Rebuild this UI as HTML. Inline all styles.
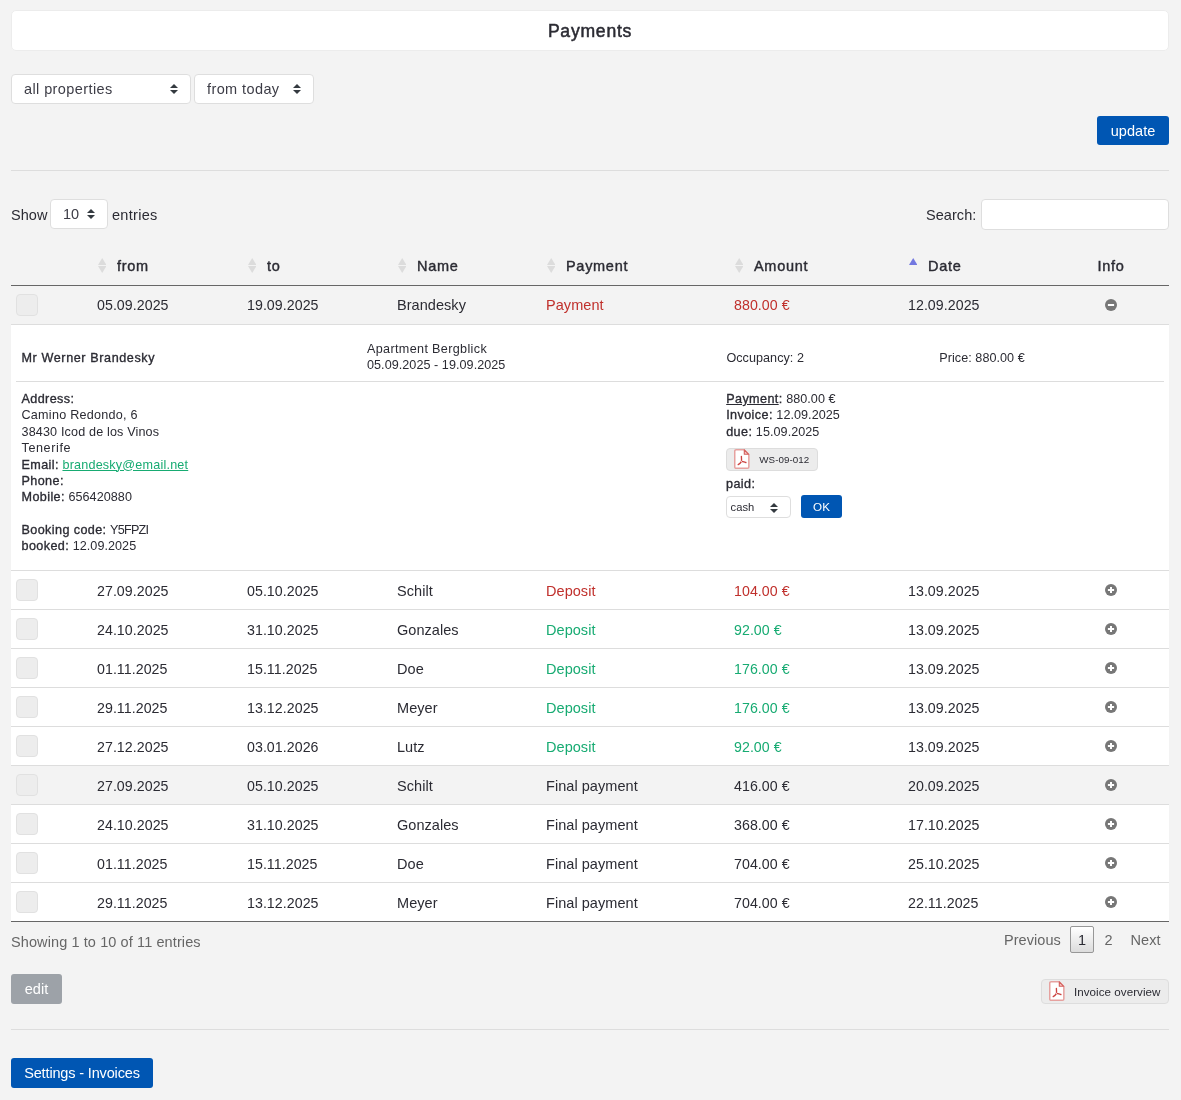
<!DOCTYPE html>
<html lang="en">
<head>
<meta charset="utf-8">
<title>Payments</title>
<style>
:root{
  --ff:"Liberation Sans", sans-serif;
  --fs:14.5px; --fs13:12.6px; --fsn:14.2px; --fs11:11.6px; --fs10:9.8px; --fs18:17.6px;
  --ls:.05px;
}
*{box-sizing:border-box;}
html,body{margin:0;padding:0;}
body{
  width:1181px;height:1100px;overflow:hidden;position:relative;will-change:transform;
  background:#f3f3f3;color:#2b2b33;
  font-family:var(--ff);font-size:var(--fs);letter-spacing:var(--ls);line-height:21px;
}
.abs{position:absolute;white-space:nowrap;}
b,.sb{font-weight:normal;-webkit-text-stroke:.33px currentColor;letter-spacing:.4px;}
#title{left:11px;top:10px;width:1158px;height:41px;background:#fff;border:1px solid #ececec;border-radius:5px;
  text-align:center;font-weight:normal;-webkit-text-stroke:.5px currentColor;letter-spacing:.75px;font-size:var(--fs18);line-height:40.600px;color:#2b2b33;}
.csel{background:#fff;border:1px solid #dedede;border-radius:4px;height:30px;line-height:28px;
  padding-left:12px;color:#3c3c46;}
.sarw{position:absolute;right:12px;top:9px;width:8px;height:10px;}
.btn{border-radius:3px;color:#fff;text-align:center;}
.btn-blue{background:#0056b3;}
.btn-grey{background:#9da2a8;}
.hr{left:11px;width:1158px;height:1px;background:#dddddd;}
.inp{background:#fff;border:1px solid #dedede;border-radius:4px;}
#tbl{left:11px;top:246px;width:1158px;border-collapse:collapse;table-layout:fixed;white-space:nowrap;}
#tbl th,#tbl td{padding:0;text-align:left;vertical-align:middle;font-weight:normal;}
#tbl thead th{height:39px;font-weight:normal;-webkit-text-stroke:.4px currentColor;letter-spacing:.7px;border-bottom:1px solid #666;position:relative;color:#2b2b33;padding-left:20px;padding-top:2px;}
#tbl thead th.c{padding-left:0;}
#tbl tbody tr.r{background:#fff;}
#tbl tbody tr.r td{border-bottom:1px solid #ddd;height:39px;padding-top:2px;}
#tbl td.n{font-size:var(--fsn);}
#tbl tbody tr.r2 td{padding-top:4px;}
#tbl tr.r2 .cb{top:-2px;}
#tbl tr.r2 .ic{top:-2px;}
#tbl tbody tr.g{background:transparent;}
#tbl tbody tr.last td{border-bottom:1px solid #666;}
#tbl .c{text-align:center;}
.cb{position:relative;top:-1px;display:block;width:22px;height:22px;margin-left:5px;background:#ededed;border:1px solid #e1e1e1;border-radius:4px;}
.red{color:#c0302c;}
.grn{color:#17ab72;}
.ic{display:inline-block;vertical-align:middle;width:12px;height:12px;position:relative;top:-1px;}
.so{position:absolute;left:0.600px;top:12px;width:8.4px;height:15px;}
#det{background:#fff;}
#det td{border-bottom:1px solid #ddd;height:246px;}
#dw{position:relative;height:245px;font-size:var(--fs13);line-height:16.38px;}
#dw .abs{line-height:16.38px;}
.pdf{position:absolute;width:15.600px;height:20px;}
.pbtn{background:#ececec;border:1px solid #dddddd;border-radius:4px;}
a{color:#17ab72;text-decoration:underline;}
.pg{color:#666;}
</style>
</head>
<body>

<div id="title" class="abs">Payments</div>

<div class="abs csel" style="left:11px;top:74px;width:180px;letter-spacing:.4px;">all properties<svg class="sarw" viewBox="0 0 4 5"><path fill="#343a40" d="M2 0L0 2h4zm0 5L0 3h4z"/></svg></div>
<div class="abs csel" style="left:194px;top:74px;width:120px;letter-spacing:.4px;">from today<svg class="sarw" viewBox="0 0 4 5"><path fill="#343a40" d="M2 0L0 2h4zm0 5L0 3h4z"/></svg></div>

<div class="abs btn btn-blue" style="left:1097px;top:116px;width:72px;height:29px;line-height:30px;">update</div>
<div class="abs hr" style="top:170px;"></div>

<div class="abs" style="left:11px;top:205.400px;">Show</div>
<div class="abs csel" style="left:50px;top:199px;width:58px;">10<svg class="sarw" viewBox="0 0 4 5"><path fill="#343a40" d="M2 0L0 2h4zm0 5L0 3h4z"/></svg></div>
<div class="abs" style="left:112px;top:205.400px;letter-spacing:.3px;">entries</div>
<div class="abs" style="left:926px;top:205.400px;">Search:</div>
<div class="abs inp" style="left:981px;top:199px;width:188px;height:31px;"></div>

<table id="tbl" class="abs">
<colgroup><col style="width:86px"><col style="width:150px"><col style="width:150px"><col style="width:149px"><col style="width:188px"><col style="width:174px"><col style="width:145px"><col style="width:116px"></colgroup>
<thead><tr>
<th></th>
<th><svg class="so" viewBox="0 0 8.4 15"><path d="M4.2 0L8.4 7H0z" fill="#dcdcdc"/><path d="M4.2 15L8.400 8H0z" fill="#dcdcdc"/></svg>from</th>
<th><svg class="so" viewBox="0 0 8.4 15"><path d="M4.2 0L8.4 7H0z" fill="#dcdcdc"/><path d="M4.2 15L8.400 8H0z" fill="#dcdcdc"/></svg>to</th>
<th><svg class="so" viewBox="0 0 8.4 15"><path d="M4.2 0L8.4 7H0z" fill="#dcdcdc"/><path d="M4.2 15L8.400 8H0z" fill="#dcdcdc"/></svg>Name</th>
<th><svg class="so" viewBox="0 0 8.4 15"><path d="M4.2 0L8.4 7H0z" fill="#dcdcdc"/><path d="M4.2 15L8.400 8H0z" fill="#dcdcdc"/></svg>Payment</th>
<th><svg class="so" viewBox="0 0 8.4 15"><path d="M4.2 0L8.4 7H0z" fill="#dcdcdc"/><path d="M4.2 15L8.400 8H0z" fill="#dcdcdc"/></svg>Amount</th>
<th><svg class="so" viewBox="0 0 8.4 15"><path d="M4.2 0L8.4 7H0z" fill="#7378e0"/></svg>Date</th>
<th class="c">Info</th>
</tr></thead>
<tbody>
<tr class="r g"><td><span class="cb"></span></td><td class="n">05.09.2025</td><td class="n">19.09.2025</td><td>Brandesky</td><td class="red">Payment</td><td class="n red">880.00 €</td><td class="n">12.09.2025</td><td class="c"><svg class="ic" viewBox="0 0 12 12"><circle cx="6" cy="6" r="6" fill="#777"/><path d="M2.900 6h6.200" stroke="#fff" stroke-width="2" fill="none"/></svg></td></tr>
<tr id="det"><td colspan="8"><div id="dw">
  <div class="abs" style="left:10.500px;top:25.700px;"><b style="letter-spacing:.6px">Mr Werner Brandesky</b></div>
  <div class="abs" style="left:356px;top:16.400px;"><span style="letter-spacing:.35px">Apartment Bergblick</span><br>05.09.2025 - 19.09.2025</div>
  <div class="abs" style="left:715.400px;top:25.700px;">Occupancy: 2</div>
  <div class="abs" style="left:928.300px;top:25.700px;">Price: 880.00 €</div>
  <div class="abs" style="left:5px;top:56px;width:1148px;height:1px;background:#ddd;"></div>
  <div class="abs" style="left:10.500px;top:66.500px;"><b>Address:</b><br><span style="letter-spacing:.25px">Camino Redondo, 6</span><br><span style="letter-spacing:.15px">38430 Icod de los Vinos</span><br><span style="letter-spacing:.6px">Tenerife</span><br><b>Email:</b> <a style="letter-spacing:.2px">brandesky@email.net</a><br><b>Phone:</b><br><b>Mobile:</b> 656420880<br><br><b>Booking code:</b> <span style="letter-spacing:-.75px">Y5FPZI</span><br><b>booked:</b> 12.09.2025</div>
  <div class="abs" style="left:715.200px;top:66.500px;"><b><u>Payment</u>:</b> 880.00 €<br><b>Invoice:</b> 12.09.2025<br><b>due:</b> 15.09.2025</div>
  <div class="abs pbtn" style="left:715px;top:123px;width:92px;height:23px;"><svg class="pdf" style="left:7px;top:0px" viewBox="0 0 15.6 20"><path d="M2.100 .75H10.100L14.850 5.500V17.900a1.350 1.350 0 0 1-1.350 1.350H2.100A1.350 1.350 0 0 1 .75 17.900V2.100A1.350 1.350 0 0 1 2.100 .75z" fill="#fff" stroke="#e6a19f" stroke-width="1.5"/><path d="M10.300 .9V5.300H14.700z" fill="#f8c9c8" stroke="#d4615e" stroke-width="1.100" stroke-linejoin="round"/><path d="M7.400 7.300C7.400 9.500 7.700 11 7.500 12.300M7.500 12.300C6.700 13.700 5.600 14.800 4.200 15.600M7.500 12.300C9 12.600 10.500 13.100 11.900 13.500" fill="none" stroke="#cc4340" stroke-width="1.350" stroke-linecap="round"/><circle cx="7.500" cy="12.300" r=".55" fill="#fff"/></svg><span class="abs" style="left:32.300px;top:3px;font-size:var(--fs10);line-height:16px;">WS-09-012</span></div>
  <div class="abs" style="left:715px;top:151.500px;"><b>paid:</b></div>
  <div class="abs inp" style="left:715px;top:171.500px;width:65px;height:22px;font-size:11.200px;line-height:20.600px;padding-left:3.500px;color:#2b2b33;">cash<svg class="sarw" style="right:12px;top:5.500px;" viewBox="0 0 4 5"><path fill="#343a40" d="M2 0L0 2h4zm0 5L0 3h4z"/></svg></div>
  <div class="abs btn btn-blue" style="left:790px;top:170px;width:41px;height:23px;line-height:23px;font-size:var(--fs11);">OK</div>
</div></td></tr>
<tr class="r r2"><td><span class="cb"></span></td><td class="n">27.09.2025</td><td class="n">05.10.2025</td><td>Schilt</td><td class="red">Deposit</td><td class="n red">104.00 €</td><td class="n">13.09.2025</td><td class="c"><svg class="ic" viewBox="0 0 12 12"><circle cx="6" cy="6" r="6" fill="#777"/><path d="M6 2.900v6.200M2.900 6h6.200" stroke="#fff" stroke-width="2" fill="none"/></svg></td></tr>
<tr class="r r2"><td><span class="cb"></span></td><td class="n">24.10.2025</td><td class="n">31.10.2025</td><td>Gonzales</td><td class="grn">Deposit</td><td class="n grn">92.00 €</td><td class="n">13.09.2025</td><td class="c"><svg class="ic" viewBox="0 0 12 12"><circle cx="6" cy="6" r="6" fill="#777"/><path d="M6 2.900v6.200M2.900 6h6.200" stroke="#fff" stroke-width="2" fill="none"/></svg></td></tr>
<tr class="r r2"><td><span class="cb"></span></td><td class="n">01.11.2025</td><td class="n">15.11.2025</td><td>Doe</td><td class="grn">Deposit</td><td class="n grn">176.00 €</td><td class="n">13.09.2025</td><td class="c"><svg class="ic" viewBox="0 0 12 12"><circle cx="6" cy="6" r="6" fill="#777"/><path d="M6 2.900v6.200M2.900 6h6.200" stroke="#fff" stroke-width="2" fill="none"/></svg></td></tr>
<tr class="r r2"><td><span class="cb"></span></td><td class="n">29.11.2025</td><td class="n">13.12.2025</td><td>Meyer</td><td class="grn">Deposit</td><td class="n grn">176.00 €</td><td class="n">13.09.2025</td><td class="c"><svg class="ic" viewBox="0 0 12 12"><circle cx="6" cy="6" r="6" fill="#777"/><path d="M6 2.900v6.200M2.900 6h6.200" stroke="#fff" stroke-width="2" fill="none"/></svg></td></tr>
<tr class="r r2"><td><span class="cb"></span></td><td class="n">27.12.2025</td><td class="n">03.01.2026</td><td>Lutz</td><td class="grn">Deposit</td><td class="n grn">92.00 €</td><td class="n">13.09.2025</td><td class="c"><svg class="ic" viewBox="0 0 12 12"><circle cx="6" cy="6" r="6" fill="#777"/><path d="M6 2.900v6.200M2.900 6h6.200" stroke="#fff" stroke-width="2" fill="none"/></svg></td></tr>
<tr class="r r2 g"><td><span class="cb"></span></td><td class="n">27.09.2025</td><td class="n">05.10.2025</td><td>Schilt</td><td>Final payment</td><td class="n ">416.00 €</td><td class="n">20.09.2025</td><td class="c"><svg class="ic" viewBox="0 0 12 12"><circle cx="6" cy="6" r="6" fill="#777"/><path d="M6 2.900v6.200M2.900 6h6.200" stroke="#fff" stroke-width="2" fill="none"/></svg></td></tr>
<tr class="r r2"><td><span class="cb"></span></td><td class="n">24.10.2025</td><td class="n">31.10.2025</td><td>Gonzales</td><td>Final payment</td><td class="n ">368.00 €</td><td class="n">17.10.2025</td><td class="c"><svg class="ic" viewBox="0 0 12 12"><circle cx="6" cy="6" r="6" fill="#777"/><path d="M6 2.900v6.200M2.900 6h6.200" stroke="#fff" stroke-width="2" fill="none"/></svg></td></tr>
<tr class="r r2"><td><span class="cb"></span></td><td class="n">01.11.2025</td><td class="n">15.11.2025</td><td>Doe</td><td>Final payment</td><td class="n ">704.00 €</td><td class="n">25.10.2025</td><td class="c"><svg class="ic" viewBox="0 0 12 12"><circle cx="6" cy="6" r="6" fill="#777"/><path d="M6 2.900v6.200M2.900 6h6.200" stroke="#fff" stroke-width="2" fill="none"/></svg></td></tr>
<tr class="r r2 last"><td><span class="cb"></span></td><td class="n">29.11.2025</td><td class="n">13.12.2025</td><td>Meyer</td><td>Final payment</td><td class="n ">704.00 €</td><td class="n">22.11.2025</td><td class="c"><svg class="ic" viewBox="0 0 12 12"><circle cx="6" cy="6" r="6" fill="#777"/><path d="M6 2.900v6.200M2.900 6h6.200" stroke="#fff" stroke-width="2" fill="none"/></svg></td></tr>
</tbody>
</table>

<div class="abs pg" style="left:11px;top:932.200px;letter-spacing:.1px;">Showing 1 to 10 of 11 entries</div>
<div class="abs pg" style="left:1004px;top:930.200px;">Previous</div>
<div class="abs" style="left:1070px;top:926px;width:24px;height:27px;border:1px solid #979797;border-radius:2px;background:linear-gradient(#fff,#dcdcdc);text-align:center;line-height:27.400px;color:#2b2b33;">1</div>
<div class="abs pg" style="left:1104.500px;top:930.200px;">2</div>
<div class="abs pg" style="left:1130.500px;top:930.200px;">Next</div>

<div class="abs btn btn-grey" style="left:11px;top:974px;width:51px;height:30px;line-height:31.400px;">edit</div>
<div class="abs pbtn" style="left:1041px;top:979px;width:128px;height:25px;"><svg class="pdf" style="left:7px;top:1px" viewBox="0 0 15.6 20"><path d="M2.100 .75H10.100L14.850 5.500V17.900a1.350 1.350 0 0 1-1.350 1.350H2.100A1.350 1.350 0 0 1 .75 17.900V2.100A1.350 1.350 0 0 1 2.100 .75z" fill="#fff" stroke="#e6a19f" stroke-width="1.5"/><path d="M10.300 .9V5.300H14.700z" fill="#f8c9c8" stroke="#d4615e" stroke-width="1.100" stroke-linejoin="round"/><path d="M7.400 7.300C7.400 9.500 7.700 11 7.500 12.300M7.500 12.300C6.700 13.700 5.600 14.800 4.200 15.600M7.500 12.300C9 12.600 10.500 13.100 11.900 13.500" fill="none" stroke="#cc4340" stroke-width="1.350" stroke-linecap="round"/><circle cx="7.500" cy="12.300" r=".55" fill="#fff"/></svg><span class="abs" style="left:32px;top:4px;font-size:var(--fs11);line-height:16px;">Invoice overview</span></div>
<div class="abs hr" style="top:1029px;"></div>
<div class="abs btn btn-blue" style="left:11px;top:1058px;width:142px;height:30px;line-height:31.400px;letter-spacing:-.15px;">Settings - Invoices</div>

</body>
</html>
